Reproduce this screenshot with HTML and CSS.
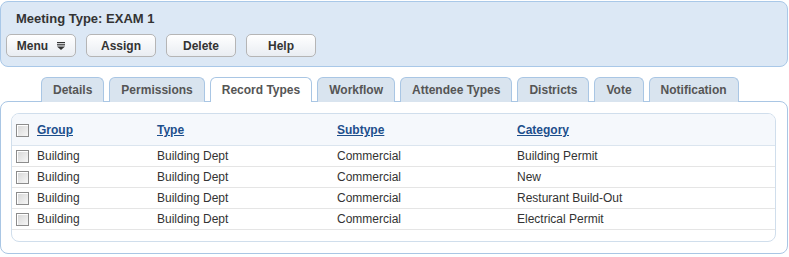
FILE: index.html
```html
<!DOCTYPE html>
<html>
<head>
<meta charset="utf-8">
<link rel="stylesheet" href="styles.css">
</head>
<body>
<div class="page">
  <div class="header">
    <div class="title">Meeting Type: EXAM 1</div>
    <div class="buttons">
      <button class="btn">Menu <svg class="menu-icon" width="8" height="8" viewBox="0 0 8 8"><rect x="0" y="0" width="8" height="1.2" fill="#333"/><rect x="0" y="2.2" width="8" height="1.2" fill="#333"/><polygon points="0,4.4 8,4.4 4,8" fill="#333"/></svg></button>
      <button class="btn">Assign</button>
      <button class="btn">Delete</button>
      <button class="btn">Help</button>
    </div>
  </div>
  <div class="tabs">
    <div class="tab">Details</div>
    <div class="tab">Permissions</div>
    <div class="tab active">Record Types</div>
    <div class="tab">Workflow</div>
    <div class="tab">Attendee Types</div>
    <div class="tab">Districts</div>
    <div class="tab">Vote</div>
    <div class="tab">Notification</div>
  </div>
  <div class="panel">
    <div class="grid">
      <div class="row head">
        <div class="cell cb"><span class="check"></span></div>
        <div class="cell"><a href="#">Group</a></div>
        <div class="cell"><a href="#">Type</a></div>
        <div class="cell"><a href="#">Subtype</a></div>
        <div class="cell"><a href="#">Category</a></div>
      </div>
      <div class="row">
        <div class="cell cb"><span class="check"></span></div>
        <div class="cell">Building</div>
        <div class="cell">Building Dept</div>
        <div class="cell">Commercial</div>
        <div class="cell">Building Permit</div>
      </div>
      <div class="row">
        <div class="cell cb"><span class="check"></span></div>
        <div class="cell">Building</div>
        <div class="cell">Building Dept</div>
        <div class="cell">Commercial</div>
        <div class="cell">New</div>
      </div>
      <div class="row">
        <div class="cell cb"><span class="check"></span></div>
        <div class="cell">Building</div>
        <div class="cell">Building Dept</div>
        <div class="cell">Commercial</div>
        <div class="cell">Resturant Build-Out</div>
      </div>
      <div class="row">
        <div class="cell cb"><span class="check"></span></div>
        <div class="cell">Building</div>
        <div class="cell">Building Dept</div>
        <div class="cell">Commercial</div>
        <div class="cell">Electrical Permit</div>
      </div>
    </div>
  </div>
</div>
</body>
</html>
```

FILE: styles.css
```css
* { box-sizing: border-box; }
body {
  margin: 0;
  background: #fff;
  font-family: "Liberation Sans", Arial, sans-serif;
  font-size: 12px;
  color: #333;
}
.page {
  width: 788px;
  padding-top: 1px;
}
.header {
  height: 66px;
  background: #dce8f5;
  border: 1px solid #a9c8e8;
  border-radius: 8px;
  padding: 9px 0 0 5px;
}
.title {
  margin-left: 10px;
  font-size: 13px;
  font-weight: bold;
  line-height: 15px;
  color: #333;
}
.buttons {
  display: flex;
  gap: 10px;
  margin-top: 8px;
}
.btn {
  width: 70px;
  height: 23px;
  border: 1px solid #b5b5b5;
  border-radius: 5px;
  background: linear-gradient(#ffffff, #e9edf2);
  font-family: "Liberation Sans", Arial, sans-serif;
  font-size: 12px;
  font-weight: bold;
  color: #333;
  padding: 0;
  display: flex;
  align-items: center;
  justify-content: center;
  gap: 9px;
}
.menu-icon { display: block; margin-top: 1px; }
.tabs {
  display: flex;
  gap: 5px;
  margin-top: 10px;
  padding-left: 41px;
  position: relative;
  z-index: 1;
}
.tab {
  height: 25px;
  padding: 0 11px;
  border: 1px solid #a9c6e4;
  border-bottom: none;
  border-radius: 6px 6px 0 0;
  background: #d9e4ef;
  color: #555;
  font-weight: bold;
  font-size: 12px;
  line-height: 25px;
  margin-bottom: -1px;
}
.tab.active {
  background: #fff;
}
.panel {
  height: 153px;
  border: 1px solid #a9c6e4;
  border-radius: 8px;
  background: #fff;
  padding: 11px 11px 11px 10px;
}
.grid {
  height: 129px;
  border: 1px solid #d0deec;
  border-radius: 8px;
  background: #fff;
  overflow: hidden;
}
.row {
  display: grid;
  grid-template-columns: 25px 120px 180px 180px 1fr;
  height: 21px;
  border-bottom: 1px solid #e5e5e5;
  align-items: center;
}
.row.head {
  height: 32px;
  background: #f5f8fc;
  border-bottom: 1px solid #dbe5ef;
  padding-top: 1px;
}
.cell {
  white-space: nowrap;
  line-height: 14px;
}
.cb { padding-left: 4px; }
.check {
  display: block;
  width: 13px;
  height: 13px;
  border: 1px solid #8c8c8c;
  background: linear-gradient(135deg, #d6d6d6, #f7f7f7);
  box-shadow: inset 1px 1px 0 #fff;
}
.head a {
  color: #1d4f8c;
  font-weight: bold;
  text-decoration: underline;
}
```
